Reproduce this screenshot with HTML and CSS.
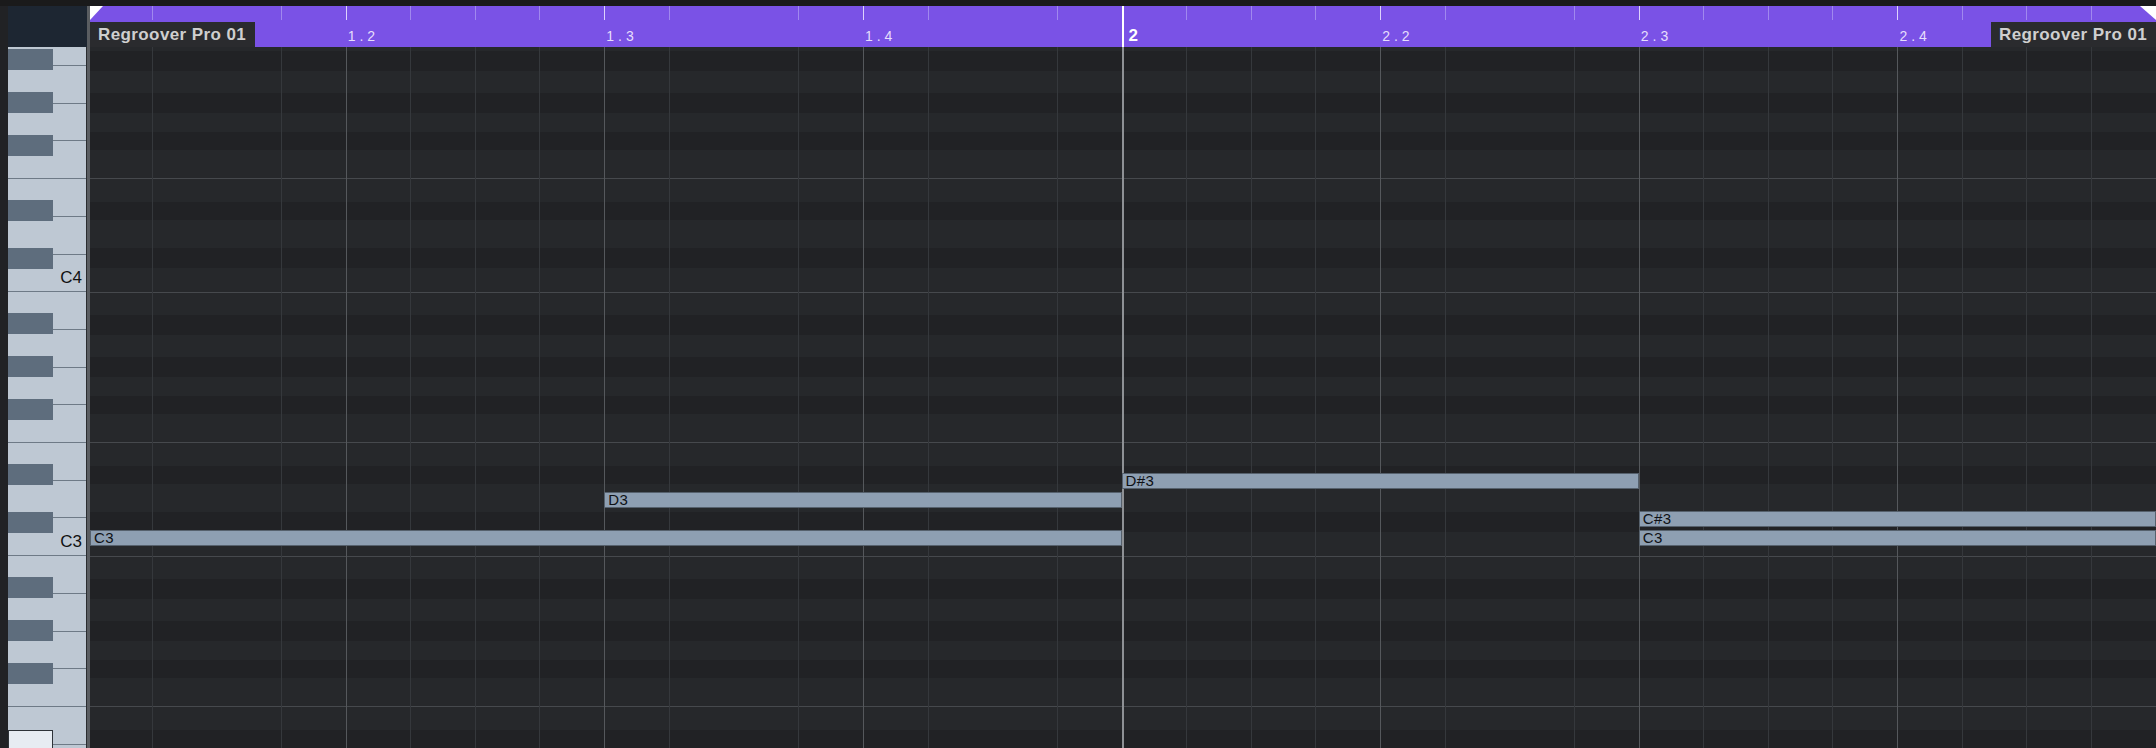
FILE: index.html
```html
<!DOCTYPE html>
<html lang="en">
<head>
  <meta charset="UTF-8">
  <title>Key Editor - Regroover Pro 01</title>
  <link rel="stylesheet" href="styles.css">
</head>
<body>
  <div class="topbar"></div>
  <div class="editor">
    <div class="corner"></div>
    <div class="ruler">
      <div class="ruler-cell first"><span class="clip-name">Regroover Pro 01</span></div>
      <div class="ruler-cell beat"><span class="pos">1.2</span></div>
      <div class="ruler-cell beat"><span class="pos">1.3</span></div>
      <div class="ruler-cell beat"><span class="pos">1.4</span></div>
      <div class="ruler-cell bar"><span class="pos bar-num">2</span></div>
      <div class="ruler-cell beat"><span class="pos">2.2</span></div>
      <div class="ruler-cell beat"><span class="pos">2.3</span></div>
      <div class="ruler-cell beat"><span class="pos">2.4</span><span class="clip-name">Regroover Pro 01</span></div>
    </div>
    <div class="keyboard">
      <div class="keys" id="keys"></div>
    </div>
    <div class="grid" id="grid">
      <div class="cols">
        <div class="col first"></div>
        <div class="col"></div>
        <div class="col"></div>
        <div class="col"></div>
        <div class="col bar"></div>
        <div class="col"></div>
        <div class="col"></div>
        <div class="col"></div>
      </div>
    </div>
  </div>

  <script>
    // teclas blancas de arriba (B4) hacia abajo
    const WHITE = ['B', 'A', 'G', 'F', 'E', 'D', 'C'];
    const BLACK_TOP = { B: 21, A: 26, G: 31, E: 21, D: 31 };
    const keys = document.getElementById('keys');
    let octave = 4;

    for (let i = 0; i < 20; i++) {
      const name = WHITE[i % 7];
      const key = document.createElement('div');
      key.className = 'white-key';
      if (name === 'C') {
        key.innerHTML = `<span class="key-label">C${octave}</span>`;
      }
      if (BLACK_TOP[name] !== undefined) {
        const black = document.createElement('div');
        black.className = 'black-key';
        if (name === 'E' && octave === 2) black.classList.add('active');
        black.style.top = BLACK_TOP[name] + 'px';
        key.appendChild(black);
      }
      if (name === 'C') octave--;
      keys.appendChild(key);
    }

    // notas: pitch en semitonos sobre C3, posiciones en semicorcheas
    const SIXTEENTH = 2069 / 32;
    const ROW = 19;
    const notes = [
      { name: 'C3', pitch: 0, start: 0, len: 16 },
      { name: 'D3', pitch: 2, start: 8, len: 8 },
      { name: 'D#3', pitch: 3, start: 16, len: 8 },
      { name: 'C#3', pitch: 1, start: 24, len: 8 },
      { name: 'C3', pitch: 0, start: 24, len: 8 }
    ];
    const grid = document.getElementById('grid');

    notes.forEach(note => {
      const left = Math.max(note.start * SIXTEENTH, 3);
      const right = (note.start + note.len) * SIXTEENTH;
      const el = document.createElement('div');
      el.className = 'note';
      el.textContent = note.name;
      el.style.left = left + 'px';
      el.style.width = (right - left) + 'px';
      el.style.top = (483 - note.pitch * ROW) + 'px';
      grid.appendChild(el);
    });
  </script>
</body>
</html>
```

FILE: styles.css
```css
body {
  margin: 0;
  width: 2156px;
  height: 748px;
  overflow: hidden;
  background-color: #1b1b1c;
  font-family: "Liberation Sans", Arial, sans-serif;
}

.topbar {
  height: 6px;
  background-color: #1a1a1b;
}

.editor {
  display: grid;
  grid-template-columns: 87px 2069px;
  grid-template-rows: 41px 701px;
  background-color: #212225;
}

.corner {
  margin-left: 8px;
  background-color: #1d2632;
}

/* regla superior */
.ruler {
  position: relative;
  display: grid;
  grid-template-columns: repeat(8, 1fr);
  background-color: #7a52e6;
}

.ruler::before {
  content: "";
  position: absolute;
  left: 3px;
  top: 0;
  border-top: 14px solid #fff;
  border-right: 13px solid transparent;
  z-index: 2;
}

.ruler::after {
  content: "";
  position: absolute;
  right: 0;
  top: 0;
  border-top: 14px solid #fff;
  border-left: 16px solid transparent;
  z-index: 2;
}

.ruler-cell {
  position: relative;
  display: flex;
  align-items: flex-end;
  justify-content: space-between;
  background: repeating-linear-gradient(to right, #a088ee 0 1px, transparent 1px 25%) 0 0 / 100% 14px no-repeat;
  background-origin: border-box;
}

.ruler-cell.first {
  border-left: 3px solid #5a5d61;
}

.ruler-cell.beat::before {
  content: "";
  position: absolute;
  left: 0;
  top: 0;
  width: 1px;
  height: 14px;
  background-color: #ddd3fc;
}

.ruler-cell.bar {
  border-left: 2px solid #fff;
}

.pos {
  margin: 0 0 2px 2px;
  font-size: 14px;
  line-height: 18px;
  letter-spacing: 4px;
  color: #e6defc;
}

.pos.bar-num {
  margin-left: 5px;
  font-size: 17px;
  font-weight: bold;
  letter-spacing: 0;
  color: #fff;
}

.clip-name {
  width: 165px;
  height: 25px;
  box-sizing: border-box;
  padding-left: 8px;
  background-color: #2a2b2e;
  color: #cfcfcf;
  font-size: 17px;
  font-weight: bold;
  letter-spacing: 0.4px;
  line-height: 26px;
  white-space: nowrap;
}

/* teclado */
.keyboard {
  margin-left: 8px;
  background-color: #bec8d3;
  border-right: 1px solid #2a2c2f;
  overflow: hidden;
}

.keys {
  display: flex;
  flex-direction: column;
  margin-top: -18.7px;
}

.white-key {
  position: relative;
  flex: none;
  height: calc(264px / 7);
  box-sizing: border-box;
  border-bottom: 1px solid #6e7a86;
  display: flex;
  align-items: flex-end;
  justify-content: flex-end;
  padding: 0 4px 5px 0;
}

.black-key {
  position: absolute;
  left: 0;
  width: 45px;
  height: 21px;
  background-color: #5e6d7d;
  z-index: 1;
}

.black-key.active {
  box-sizing: border-box;
  margin-top: 2px;
  background-color: #e7ecf2;
  border: 1px solid #2e3338;
}

.key-label {
  font-size: 17px;
  line-height: 17px;
  color: #111;
}

/* rejilla */
.grid {
  position: relative;
  overflow: hidden;
  background: linear-gradient(to bottom,
    #46494d 0 1px,
    #26282b 1px 23px,
    #212225 23px 43px,
    #26282b 43px 65px,
    #212225 65px 85px,
    #26282b 85px 104px,
    #212225 104px 122px,
    #26282b 122px 150px,
    #46494d 150px 151px,
    #26282b 151px 174px,
    #212225 174px 192px,
    #26282b 192px 220px,
    #212225 220px 240px,
    #26282b 240px 264px);
  background-size: 100% 264px;
  background-position: 0 245px;
}

.cols {
  display: grid;
  grid-template-columns: repeat(8, 1fr);
  height: 100%;
}

.col {
  border-left: 1px solid #55585c;
  background: repeating-linear-gradient(to right, #35383c 0 1px, transparent 1px 25%);
  background-origin: border-box;
}

.col.first {
  border-left: 3px solid #5a5d61;
}

.col.bar {
  border-left: 2px solid #8e9195;
}

.note {
  position: absolute;
  height: 16px;
  box-sizing: border-box;
  padding-left: 3px;
  background-color: #8e9fb2;
  border: 1px solid #56616d;
  color: #0e1115;
  font-size: 15px;
  letter-spacing: 0.4px;
  line-height: 14px;
  white-space: nowrap;
  overflow: hidden;
}
```
